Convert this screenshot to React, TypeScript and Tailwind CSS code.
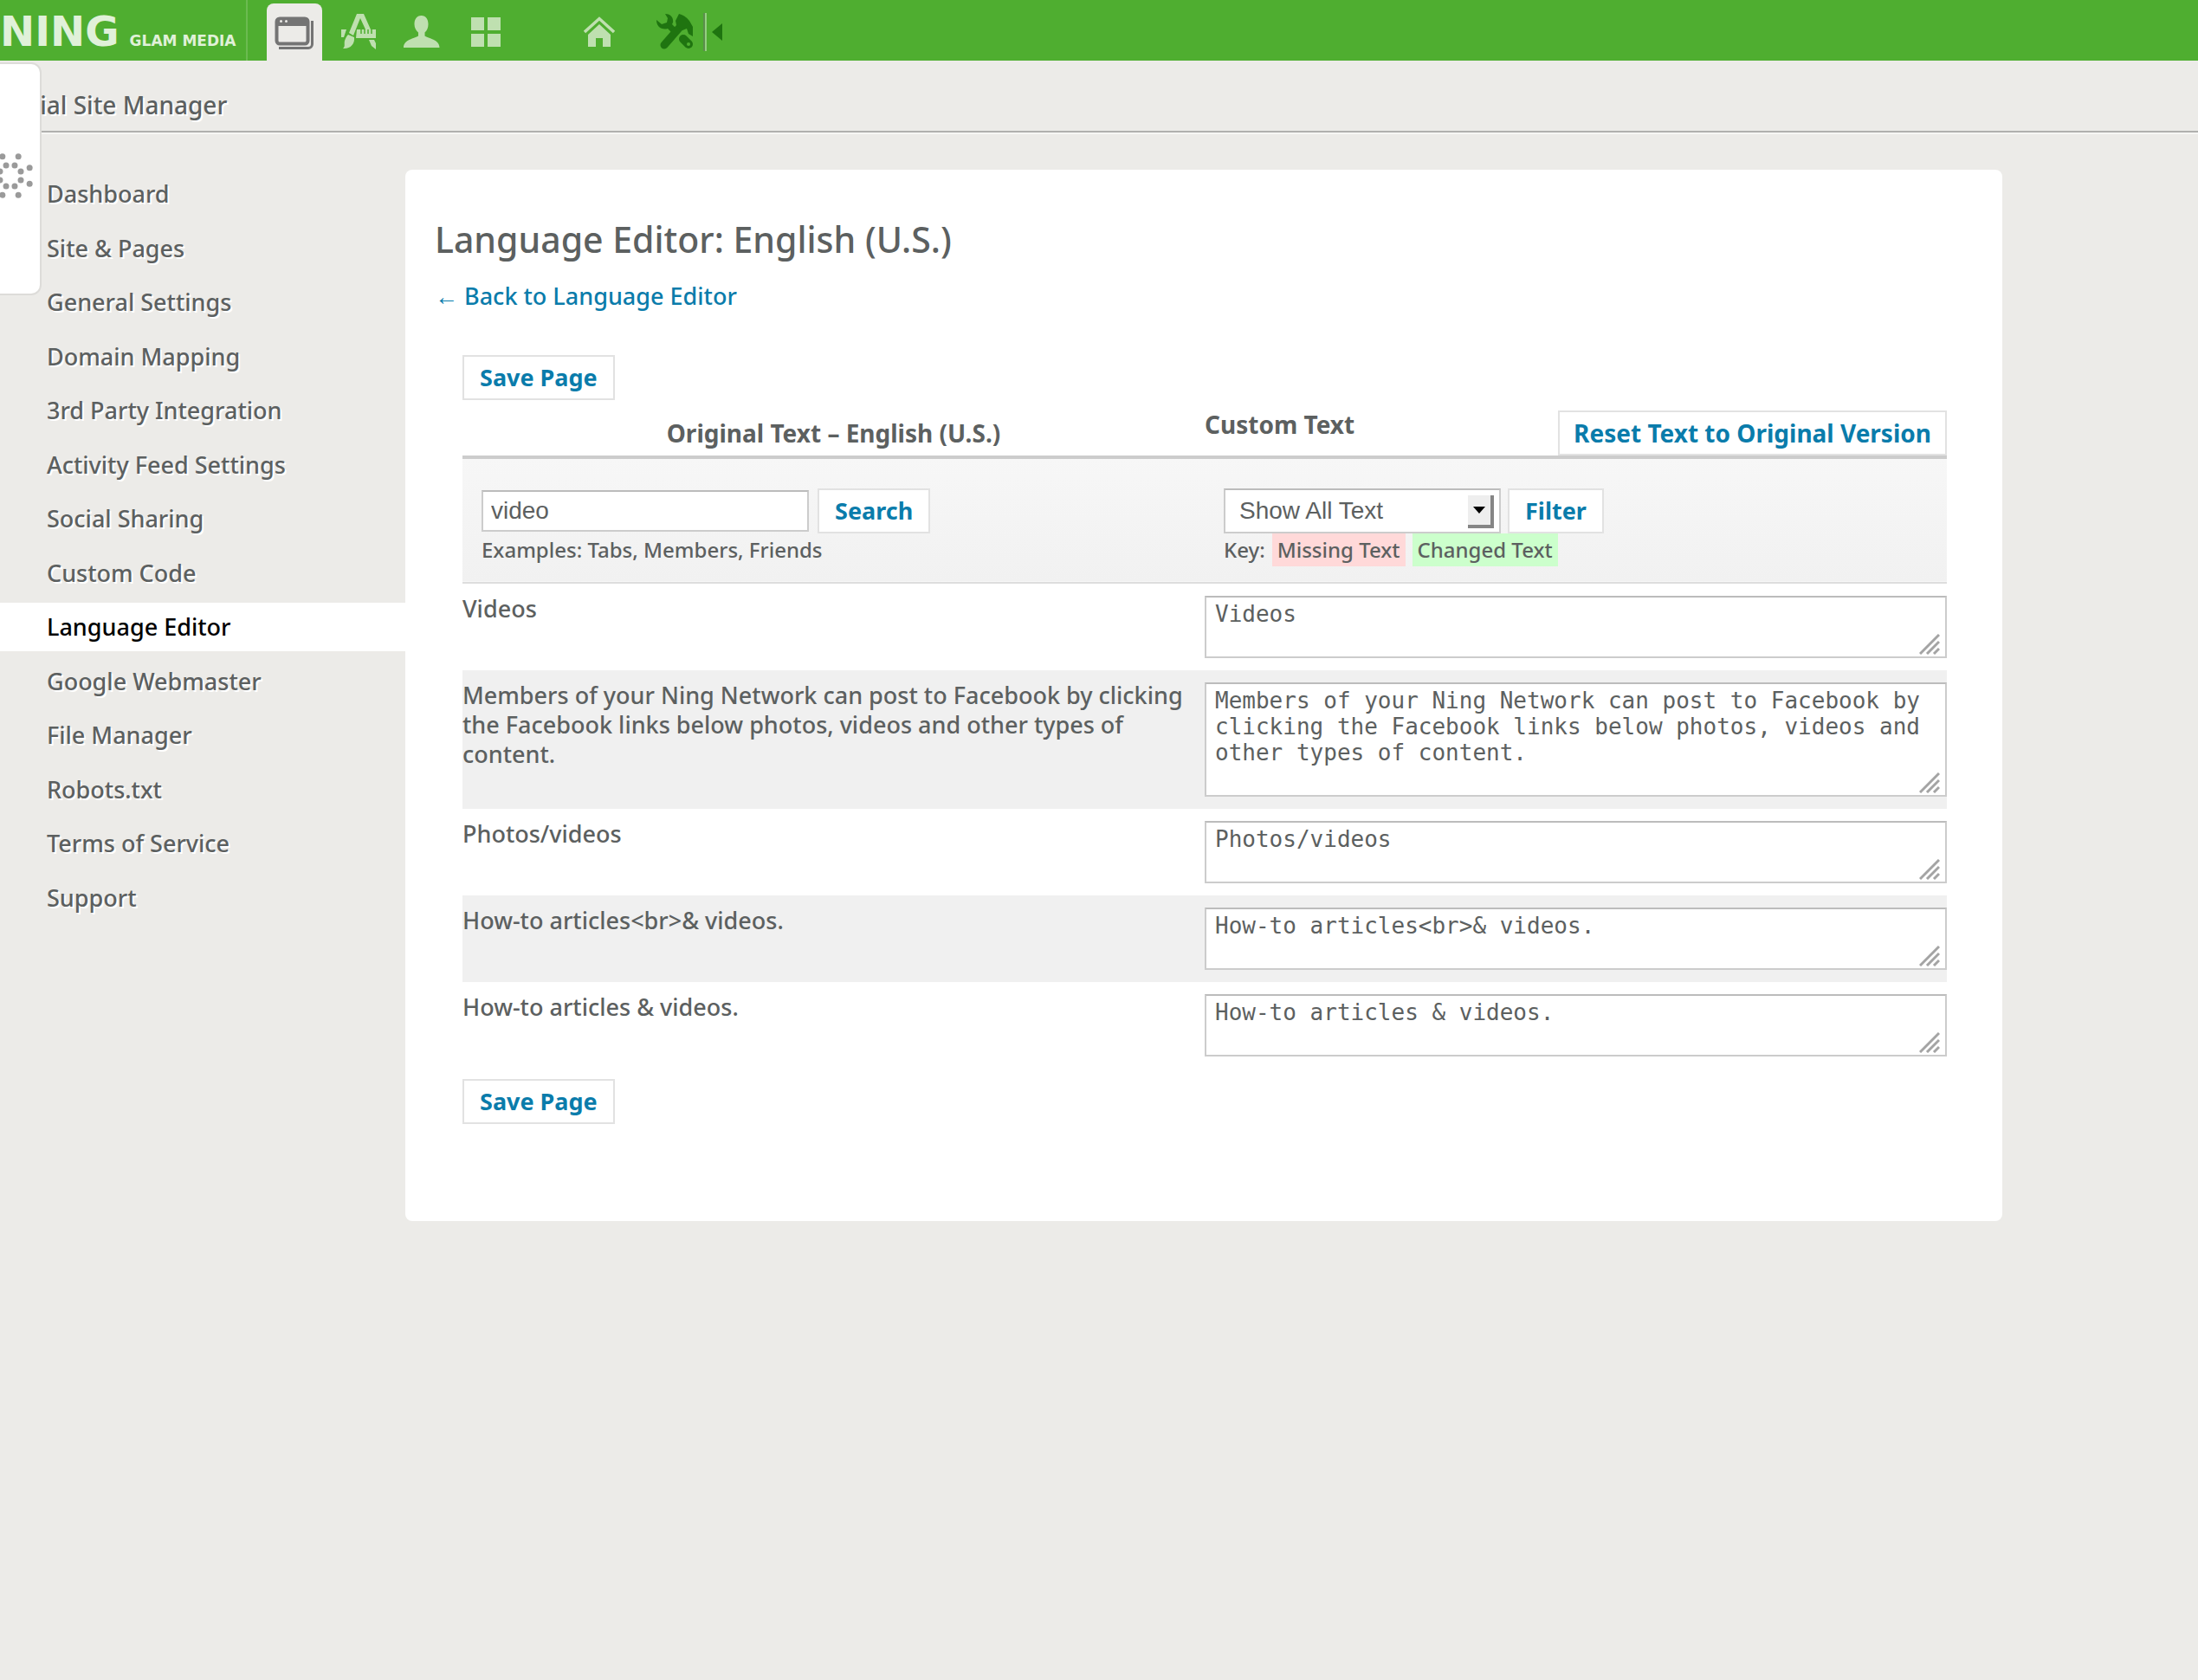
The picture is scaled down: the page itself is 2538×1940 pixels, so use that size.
import { useState } from "react";
import clsx from "clsx";

interface Phrase {
  id: string;
  original: string;
  rows: number;
}

const navItems = [
  "Dashboard",
  "Site & Pages",
  "General Settings",
  "Domain Mapping",
  "3rd Party Integration",
  "Activity Feed Settings",
  "Social Sharing",
  "Custom Code",
  "Language Editor",
  "Google Webmaster",
  "File Manager",
  "Robots.txt",
  "Terms of Service",
  "Support",
];

const phrases: Phrase[] = [
  { id: "videos", original: "Videos", rows: 2 },
  {
    id: "facebook",
    original:
      "Members of your Ning Network can post to Facebook by clicking the Facebook links below photos, videos and other types of content.",
    rows: 4,
  },
  { id: "photos-videos", original: "Photos/videos", rows: 2 },
  { id: "how-to-br", original: "How-to articles<br>& videos.", rows: 2 },
  { id: "how-to", original: "How-to articles & videos.", rows: 2 },
];

const buttonBase =
  "h-[52px] border-2 border-[#e2e2e2] bg-white leading-[48px] font-bold whitespace-nowrap text-[#0a7cab]";
const buttonClass = clsx(buttonBase, "px-[18px] text-[27px]");

const fieldBorder = "border-2 border-[#cccccc] border-t-[#bcbcbc] bg-white";

function WindowIcon() {
  return (
    <svg width="46" height="42" viewBox="0 0 46 42" fill="none">
      <rect x="2.5" y="3.5" width="36" height="29" rx="3.5" stroke="#747474" strokeWidth="4" />
      <path d="M2 12V6a4 4 0 0 1 4-4h29a4 4 0 0 1 4 4v6z" fill="#747474" />
      <circle cx="7.5" cy="6.5" r="1.5" fill="#ecebe8" />
      <circle cx="13.5" cy="6.5" r="1.5" fill="#ecebe8" />
      <path d="M43.5 6v27a4.5 4.5 0 0 1-4.5 4.5H5" stroke="#747474" strokeWidth="3" />
    </svg>
  );
}

function AppsIcon() {
  return (
    <svg width="42" height="42" viewBox="0 0 42 42" fill="#bfe0b0">
      <path d="M18 0h8l8 18h-6L22 5l-8 20-5-3z" />
      <path d="M0 18h6l-3 9H0z" />
      <path d="M18 18h22v10H17z" />
      <path d="M23 18v5M27 18v5M31 18v5M35 18v5" stroke="#4fae30" strokeWidth="1.5" />
      <path d="M32 30h6l2 4v7l-5-4z" />
      <path d="M8 24l7 3c1 8-5 14-13 13 3-3 1-5 2-9 1-3 2-5 4-7z" />
    </svg>
  );
}

function PersonIcon() {
  return (
    <svg width="42" height="38" viewBox="0 0 42 38" fill="#bfe0b0">
      <path d="M20.5 0c5.500 0 8 4.500 8 10 0 4-1.500 7.500-4 9.500v4c4 3 17 4 17 13.500H0c0-9.500 13-10.500 17-13.500v-4c-2.500-2-4.500-5.500-4.500-9.500 0-5.500 2.500-10 8-10z" />
    </svg>
  );
}

function GridIcon() {
  return (
    <svg width="34" height="34" viewBox="0 0 34 34" fill="#bfe0b0">
      <path d="M0 0h15v15H0zM19 0h15v15H19zM0 19h15v15H0zM19 19h15v15H19z" />
    </svg>
  );
}

function HomeIcon() {
  return (
    <svg width="36" height="36" viewBox="0 0 36 36">
      <path d="M1 18L18 2.500 35 18" fill="none" stroke="#bfe0b0" strokeWidth="3.5" />
      <path d="M18 9l13 12v14h-9V25h-8v10H5V21z" fill="#bfe0b0" />
    </svg>
  );
}

function ToolsIcon() {
  return (
    <svg width="44" height="44" viewBox="0 0 44 44" fill="#1f7410">
      <path d="M10 1c6 0 10 4 9 10l-1 2 5 5-5 5-5-5C6 20 0 16 0 8l6 5 6-2 1-5z" />
      <path d="M31 30l6 6" stroke="#1f7410" strokeWidth="10" strokeLinecap="round" />
      <circle cx="37" cy="36" r="2" fill="#4fae30" />
      <path d="M9 37L29 14" stroke="#1f7410" strokeWidth="9" strokeLinecap="round" />
      <path d="M22 9l4-8c4 1 8 3 12 8l4 7v11l-5-3-2-6-5 2-7-6z" />
    </svg>
  );
}

function Spinner() {
  const angles = Array.from({ length: 8 }, (_, i) => ((i + 0.5) * Math.PI) / 4);
  return (
    <svg width="64" height="64" viewBox="-32 -32 64 64" className="shrink-0" fill="#9a9a9a">
      {angles.map((a) => (
        <g key={a}>
          <circle cx={Math.cos(a) * 13} cy={Math.sin(a) * 13} r="3.5" />
          <circle cx={Math.cos(a) * 24} cy={Math.sin(a) * 24} r="3.5" />
        </g>
      ))}
    </svg>
  );
}

function Grip() {
  return (
    <svg
      width="24"
      height="24"
      viewBox="0 0 24 24"
      className="pointer-events-none absolute right-2 bottom-1"
      stroke="#a4a4a4"
      strokeWidth="3"
    >
      <path d="M1 23L23 1M9 23L23 9M17 23l6-6" />
    </svg>
  );
}

function TopBar() {
  return (
    <header className="flex h-[70px] items-center bg-[#4fae30]">
      <a
        href="#"
        aria-label="Ning Glam Media"
        className="flex h-full w-[286px] shrink-0 items-baseline gap-3 border-r-2 border-[#6bbb50] pt-2 font-['DejaVu_Sans',sans-serif] font-bold text-[#e0f1d9]"
      >
        <span className="text-[48px] leading-[56px]">NING</span>
        <span className="text-[17px] leading-[56px]">GLAM MEDIA</span>
      </a>
      <nav className="flex h-full items-center pt-1">
        <a
          href="#"
          aria-label="Site"
          className="ml-[22px] flex h-[66px] w-16 items-center justify-center self-end rounded-t-lg bg-[#ecebe8] pt-1"
        >
          <WindowIcon />
        </a>
        <a href="#" aria-label="Apps" className="ml-[22px]">
          <AppsIcon />
        </a>
        <a href="#" aria-label="Members" className="ml-[30px]">
          <PersonIcon />
        </a>
        <a href="#" aria-label="Pages" className="ml-9">
          <GridIcon />
        </a>
        <a href="#" aria-label="Home" className="ml-24">
          <HomeIcon />
        </a>
        <a href="#" aria-label="Tools" className="ml-12">
          <ToolsIcon />
        </a>
        <span className="ml-[10px] h-11 w-1 border-r-2 border-l-2 border-r-[#94cf80] border-l-[#5c8f4c]" />
        <button type="button" aria-label="Collapse" className="ml-1.5">
          <svg width="12" height="20" viewBox="0 0 12 20" fill="#1f7410">
            <path d="M12 0v20L0 10z" />
          </svg>
        </button>
      </nav>
    </header>
  );
}

function Sidebar() {
  return (
    <nav className="w-[468px] shrink-0">
      <ul>
        {navItems.map((item) => {
          const active = item === "Language Editor";
          return (
            <li key={item} className="flex h-[62px] items-center even:h-[63px]">
              <a
                href="#"
                className={clsx(
                  "block h-14 w-full pl-[54px] text-[27px] leading-14",
                  active ? "bg-white text-black" : "[text-shadow:2px_2px_0_#ffffff]"
                )}
              >
                {item}
              </a>
            </li>
          );
        })}
      </ul>
    </nav>
  );
}

export default function App() {
  const [search, setSearch] = useState("video");
  const [filter, setFilter] = useState("all");
  const [custom, setCustom] = useState<Record<string, string>>(
    Object.fromEntries(phrases.map((p) => [p.id, p.original]))
  );

  const handleCustomChange = (id: string, value: string) => {
    setCustom((prev) => ({
      ...prev,
      [id]: value,
    }));
  };

  return (
    <div className="relative min-h-screen bg-[#ecebe8] font-['Noto_Sans','Open_Sans',sans-serif] font-medium text-[#5c6060]">
      <TopBar />

      <div className="flex h-[83px] items-end border-b-2 border-[#b0b0ae] pb-3 [box-shadow:0_2px_0_#f6f6f4]">
        <h2 className="text-[28px] leading-9 font-medium [text-shadow:2px_2px_0_#ffffff]">Social Site Manager</h2>
      </div>

      <div className="absolute top-[72px] left-0 flex h-[269px] w-12 items-center justify-end overflow-hidden rounded-r-xl border-2 border-l-0 border-[#dddcd9] bg-white pr-0.5 pb-2">
        <Spinner />
      </div>

      <div className="flex items-start pt-10">
        <Sidebar />

        <main className="mt-[3px] mr-[226px] min-w-0 flex-1 rounded-lg bg-white px-[34px] pt-[50px] pb-28">
          <h1 className="text-[41px] leading-[60px] font-medium">Language Editor: English (U.S.)</h1>
          <a href="#" className="mt-4 block text-[27px] leading-10 text-[#0a7cab]">
            ← Back to Language Editor
          </a>

          <form className="mt-12 pr-[30px] pl-8" onSubmit={(e) => e.preventDefault()}>
            <button type="submit" className={buttonClass}>
              Save Page
            </button>

            <table className="mt-3 w-full table-fixed border-collapse">
              <thead>
                <tr className="border-b-4 border-[#cccccc]">
                  <th className="p-0 text-center text-[28px] leading-[52px] font-bold">
                    Original Text – English (U.S.)
                  </th>
                  <th className="p-0">
                    <div className="flex items-start justify-between">
                      <span className="text-[28px] leading-8 font-bold">Custom Text</span>
                      <button type="button" className={clsx(buttonBase, "px-4 text-[28px]")}>
                        Reset Text to Original Version
                      </button>
                    </div>
                  </th>
                </tr>
              </thead>
              <tbody>
                <tr className="h-[145px] border-b-2 border-[#dddddd] bg-linear-to-b from-[#f7f7f7] to-[#f1f1f1] align-top">
                  <td className="p-0 pt-[34px] pl-[22px]">
                    <div className="flex items-center gap-[10px]">
                      <input
                        type="text"
                        aria-label="Search text"
                        value={search}
                        onChange={(e) => setSearch(e.target.value)}
                        className={clsx(
                          fieldBorder,
                          "h-12 w-[378px] px-[9px] font-['Liberation_Sans',sans-serif] text-[28px] font-normal"
                        )}
                      />
                      <button type="button" className={buttonClass}>
                        Search
                      </button>
                    </div>
                    <p className="text-[24px] leading-[38px]">Examples: Tabs, Members, Friends</p>
                  </td>
                  <td className="p-0 pt-[34px] pl-[22px]">
                    <div className="flex items-center gap-2">
                      <div className="relative">
                        <select
                          aria-label="Show"
                          value={filter}
                          onChange={(e) => setFilter(e.target.value)}
                          className={clsx(
                            fieldBorder,
                            "block h-[52px] w-80 appearance-none pl-4 font-['Liberation_Sans',sans-serif] text-[28px] font-normal"
                          )}
                        >
                          <option value="all">Show All Text</option>
                          <option value="missing">Show Missing Text</option>
                          <option value="changed">Show Changed Text</option>
                        </select>
                        <span className="pointer-events-none absolute top-2 right-2 flex h-[38px] w-[30px] items-center justify-center border-r-4 border-b-4 border-[#858585] bg-[#eeeeee]">
                          <svg width="14" height="8" viewBox="0 0 14 8">
                            <path d="M0 0h14L7 8z" fill="#000000" />
                          </svg>
                        </span>
                      </div>
                      <button type="button" className={buttonClass}>
                        Filter
                      </button>
                    </div>
                    <p className="flex gap-2 text-[24px] leading-[38px]">
                      <span>Key:</span>
                      <span className="bg-[#ffd9d9] px-[6px]">Missing Text</span>
                      <span className="bg-[#ccffcc] px-[6px]">Changed Text</span>
                    </p>
                  </td>
                </tr>
                {phrases.map((phrase) => (
                  <tr key={phrase.id} className="align-top odd:bg-[#f0f0f0]">
                    <td className="p-0 pt-3 pr-6">
                      <label htmlFor={phrase.id} className="block text-[27px] leading-[34px]">
                        {phrase.original}
                      </label>
                    </td>
                    <td className="p-0 py-[14px]">
                      <div className="relative">
                        <textarea
                          id={phrase.id}
                          rows={phrase.rows}
                          value={custom[phrase.id]}
                          onChange={(e) => handleCustomChange(phrase.id, e.target.value)}
                          className={clsx(
                            fieldBorder,
                            "block w-full resize-none overflow-hidden px-[10px] pt-1 pb-1 font-['DejaVu_Sans_Mono',monospace] text-[26px] leading-[30px] font-normal"
                          )}
                        />
                        <Grip />
                      </div>
                    </td>
                  </tr>
                ))}
              </tbody>
            </table>

            <button type="submit" className={clsx(buttonClass, "mt-3")}>
              Save Page
            </button>
          </form>
        </main>
      </div>
    </div>
  );
}
